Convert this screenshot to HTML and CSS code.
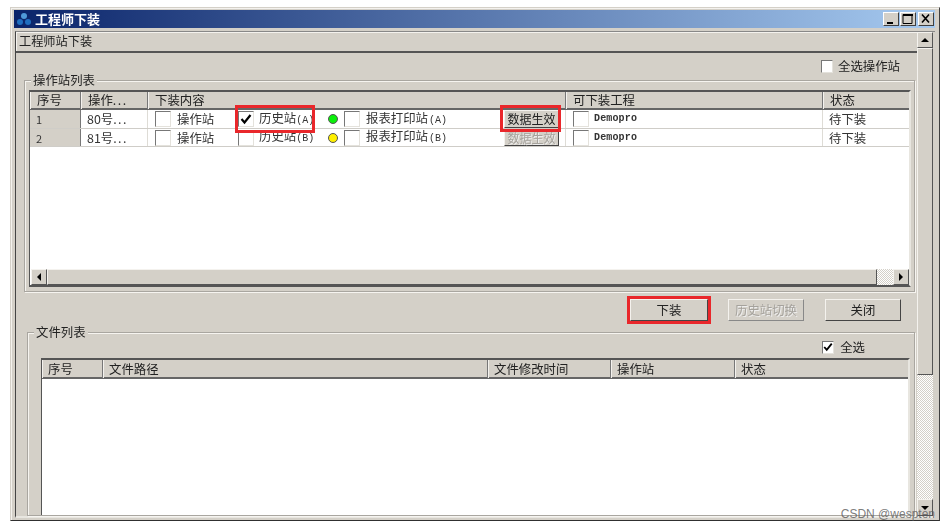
FILE: index.html
```html
<!DOCTYPE html>
<html lang="zh-CN">
<head>
<meta charset="utf-8">
<title>工程师下装</title>
<link rel="stylesheet" href="styles.css">
</head>
<body>
<div class="window">
  <div class="titlebar">
    <svg class="appicon" width="16" height="14" viewBox="0 0 16 14"><circle cx="8" cy="4" r="3" fill="#4f9ad8"/><circle cx="4" cy="10" r="3" fill="#1f6fc0"/><circle cx="12" cy="10" r="3" fill="#1f6fc0"/></svg>
    <span class="titletext">工程师下装</span>
    <div class="winbtns">
      <button class="winbtn"><svg width="14" height="12" viewBox="0 0 14 12"><rect x="3" y="9" width="6" height="2" fill="#000"/></svg></button>
      <button class="winbtn"><svg width="14" height="12" viewBox="0 0 14 12"><path d="M2 1.5h9v9h-9z" fill="none" stroke="#000"/><rect x="2" y="1" width="10" height="2" fill="#000"/></svg></button>
      <button class="winbtn winbtn-close"><svg width="14" height="12" viewBox="0 0 14 12"><path d="M3 1.5l7 8M10 1.5l-7 8" stroke="#000" stroke-width="1.6" fill="none"/></svg></button>
    </div>
  </div>
  <div class="client">
    <div class="main">
      <div class="tabhead">工程师站下装</div>
      <div class="panel">
        <label class="selall"><span class="cb cb-small"></span>全选操作站</label>
        <fieldset class="group group-stations">
          <legend>操作站列表</legend>
          <div class="list list-stations">
            <div class="row head cols-st">
              <div class="hc">序号</div><div class="hc">操作<span class="dots">...</span></div><div class="hc">下装内容</div><div class="hc">可下装工程</div><div class="hc">状态</div>
            </div>
            <div class="row item cols-st">
              <div class="c c-no">1</div>
              <div class="c">80号<span class="dots">...</span></div>
              <div class="c c-content">
                <span class="cb"></span><span>操作站</span>
                <span class="cb cb-on mark mark-a"><svg width="12" height="12" viewBox="0 0 12 12"><path d="M1.500 6l3 3.500L10.500 2" fill="none" stroke="#000" stroke-width="2.200"/></svg></span><span>历史站<small>(A)</small></span>
                <span class="led led-green"></span>
                <span class="cb"></span><span>报表打印站<small class="gap">(A)</small></span>
                <span class="cellbtn mark mark-b">数据生效</span>
              </div>
              <div class="c c-project"><span class="cb"></span><span class="mono">Demopro</span></div>
              <div class="c">待下装</div>
            </div>
            <div class="row item cols-st">
              <div class="c c-no">2</div>
              <div class="c">81号<span class="dots">...</span></div>
              <div class="c c-content">
                <span class="cb"></span><span>操作站</span>
                <span class="cb"></span><span>历史站<small>(B)</small></span>
                <span class="led led-yellow"></span>
                <span class="cb"></span><span>报表打印站<small class="gap">(B)</small></span>
                <span class="cellbtn cellbtn-off">数据生效</span>
              </div>
              <div class="c c-project"><span class="cb"></span><span class="mono">Demopro</span></div>
              <div class="c">待下装</div>
            </div>
            <div class="listfill"></div>
            <div class="hscroll">
              <span class="sbtn"><svg width="8" height="8" viewBox="0 0 8 8"><path d="M6 0v8L2 4z"/></svg></span>
              <span class="hthumb"></span>
              <span class="checker"></span>
              <span class="sbtn"><svg width="8" height="8" viewBox="0 0 8 8"><path d="M2 0v8l4-4z"/></svg></span>
            </div>
          </div>
        </fieldset>
        <div class="actions">
          <button class="btn btn-primary">下装</button>
          <button class="btn btn-off">历史站切换</button>
          <button class="btn btn-close">关闭</button>
        </div>
        <fieldset class="group group-files">
          <legend>文件列表</legend>
          <label class="selall selall-files"><span class="cb cb-small cb-on"><svg width="10" height="10" viewBox="0 0 12 12"><path d="M1.500 6l3 3.500L10.500 2" fill="none" stroke="#000" stroke-width="2.200"/></svg></span>全选</label>
          <div class="list list-files">
            <div class="row head head-files cols-files">
              <div class="hc">序号</div><div class="hc">文件路径</div><div class="hc">文件修改时间</div><div class="hc">操作站</div><div class="hc">状态</div>
            </div>
            <div class="listfill"></div>
          </div>
        </fieldset>
      </div>
    </div>
    <div class="vscroll">
      <span class="sbtn sbtn-v"><svg width="8" height="8" viewBox="0 0 8 8"><path d="M0 6h8L4 2z"/></svg></span>
      <span class="vthumb"></span>
      <span class="checker"></span>
      <span class="sbtn sbtn-v sbtn-down"><svg width="8" height="8" viewBox="0 0 8 8"><path d="M0 2h8L4 6z"/></svg></span>
    </div>
  </div>
</div>
<div class="watermark">CSDN @wespten</div>
</body>
</html>
```
FILE: styles.css
```css
* { box-sizing: border-box; }
html, body { margin: 0; height: 100%; background: #fff; overflow: hidden; }
body {
  font-family: "Noto Sans CJK SC", "Liberation Sans", sans-serif;
  font-size: 12.4px;
  line-height: 14px;
  color: #222;
  position: relative;
}
.window {
  width: 930px;
  height: 514px;
  margin: 7px 0 0 10px;
  padding: 2px 4px 2px 3px;
  background: #d4d0c8;
  border: 1px solid;
  border-color: #d4d0c8 #404040 #303030 #d4d0c8;
  box-shadow: inset 1px 1px 0 #f4f2ee;
  display: flex;
  flex-direction: column;
  filter: blur(0.4px);
}
.titlebar {
  height: 18px;
  flex: none;
  display: flex;
  align-items: center;
  padding: 0 1px 0 2px;
  color: #fff;
  background: linear-gradient(90deg, #0a246a, #a6caf0);
}
.appicon { flex: none; margin-right: 3px; }
.titletext { font-weight: 700; font-size: 13px; color: #fff; }
.winbtns { margin-left: auto; display: flex; gap: 1px; }
.winbtn {
  width: 16px;
  height: 14px;
  padding: 0;
  border: 1px solid;
  border-color: #fff #404040 #404040 #fff;
  background: #d4d0c8;
  display: flex;
  align-items: center;
  justify-content: center;
}
.winbtn-close { margin-left: 1px; }
.client {
  flex: 1;
  min-height: 0;
  margin: 3px 0 0 1px;
  display: flex;
  border-left: 1px solid #444;
  border-top: 1px solid #888;
  border-bottom: 2px solid #e8e6e0;
}
.main { width: 901px; flex: none; display: flex; flex-direction: column; min-height: 0; }
.tabhead {
  height: 21px;
  flex: none;
  padding: 2px 3px;
  background: #d4d0c8;
  box-shadow: inset 1px 1px 0 #f4f2ee;
  border-bottom: 2px solid #555;
  font-size: 12.2px;
}
.panel { flex: 1; min-height: 0; display: flex; flex-direction: column; }
.selall {
  display: flex;
  align-items: center;
  justify-content: flex-end;
  gap: 5px;
  height: 14px;
  margin: 6px 17px 0 0;
  flex: none;
}
.group {
  margin: 0;
  padding: 0;
  border: 1px solid #a9a6a0;
  box-shadow: inset 1px 1px 0 #f6f4f0, 1px 1px 0 #f6f4f0;
  min-width: 0;
}
.group legend {
  padding: 0 2px;
  margin: 0;
  line-height: 14px;
  background: #d4d0c8;
}
.group-stations {
  height: 219px;
  margin: 0 2px 0 8px;
  padding: 3px 3px 5px 4px;
  flex: none;
}
.group-stations legend { margin-left: 2px; }
.group-files {
  flex: 1;
  min-height: 0;
  margin: 0 2px 0 11px;
  padding: 0 4px 0 13px;
  display: flex;
  flex-direction: column;
}
.group-files legend { margin-left: -7px; }
.list {
  background: #fff;
  border-top: 2px solid #555;
  border-left: 1px solid #555;
  border-right: 2px solid #e8e6e0;
  display: flex;
  flex-direction: column;
}
.list-stations { height: 197px; border-bottom: 2px solid #555; }
.list-files { flex: 1; min-height: 0; margin-top: 4px; }
.listfill { flex: 1; min-height: 0; }
.row { display: grid; flex: none; }
.cols-st { grid-template-columns: 51px 67px 418px 257px 87px; }
.cols-files { grid-template-columns: 61px 385px 123px 124px 176px; }
.head { height: 18px; background: #d4d0c8; border-bottom: 2px solid #666; }
.head-files { height: 19px; }
.head-files .hc { padding: 0 6px; line-height: 18px; }
.hc { padding: 0 7px; border-right: 1px solid #777; box-shadow: inset 1px 0 0 #f4f2ee; white-space: nowrap; line-height: 17px; }
.hc:last-child { border-right: 0; }
.dots { letter-spacing: 1.5px; }
.item { height: 19px; border-bottom: 1px solid #cfcdc8; }
.item + .item { height: 18px; }
.c {
  padding: 0 6px;
  border-right: 1px solid #dedcd6;
  white-space: nowrap;
  display: flex;
  align-items: center;
  min-width: 0;
  color: #333;
}
.c:last-child { border-right: 0; }
.c-no { background: #d4d0c8; font-size: 11px; border-right: 1px solid #777; }
.c-content {
  display: grid;
  padding-left: 7px;
  grid-template-columns: 16px 67px 16px 74px 16px 16px 144px 55px;
  align-items: center;
  justify-items: start;
}
.c-content > span:nth-child(2) { padding-left: 6px; }
.c-content > span:nth-child(4) { padding-left: 5px; }
.c-content > span:nth-child(7) { padding-left: 6px; }
.c-content small { font-family: "Liberation Mono", monospace; font-size: 10px; }
.c-content small.gap { margin-left: 1px; }
.c-project { gap: 5px; padding-left: 7px; }
.cb {
  width: 16px;
  height: 16px;
  flex: none;
  display: flex;
  align-items: center;
  justify-content: center;
  background: #fff;
  border: 1px solid;
  border-color: #777 #e4e2dc #e4e2dc #777;
}
.cb-small { width: 12px; height: 13px; }
.mono { font-family: "Liberation Mono", monospace; font-size: 10px; font-weight: 700; color: #333; letter-spacing: 0.15px; }
.led { width: 10px; height: 10px; border-radius: 50%; border: 1px solid #555; }
.led-green { background: #0cf00c; }
.led-yellow { background: #fff000; }
.cellbtn {
  width: 55px;
  height: 18px;
  display: flex;
  align-items: center;
  justify-content: center;
  background: #d4d0c8;
  border: 1px solid;
  border-color: #f4f2ee #444 #444 #f4f2ee;
  font-size: 12px;
  color: #222;
}
.cellbtn-off { color: #a5a29c; text-shadow: 1px 1px 0 #eee; height: 17px; }
.mark { position: relative; }
.mark::after {
  content: "";
  position: absolute;
  box-sizing: border-box;
  border: 3px solid #e9272b;
}
.mark-a::after { left: -4px; top: -7px; width: 80px; height: 28px; }
.mark-b::after { left: -5px; top: -6px; width: 61px; height: 27px; }
.hscroll { height: 16px; margin-top: auto; display: flex; flex: none; background: #d4d0c8; margin-left: 1px; }
.sbtn {
  width: 16px;
  height: 16px;
  flex: none;
  display: flex;
  align-items: center;
  justify-content: center;
  background: #d4d0c8;
  border: 1px solid;
  border-color: #f4f2ee #555 #555 #f4f2ee;
}
.hthumb {
  flex: 1;
  background: #d4d0c8;
  border: 1px solid;
  border-color: #f4f2ee #555 #555 #f4f2ee;
}
.checker {
  flex: none;
  width: 16px;
  background: repeating-conic-gradient(#fff 0 25%, #d4d0c8 0 50%) 0 0 / 2px 2px;
}
.actions { height: 26px; flex: none; margin-top: 7px; display: flex; align-items: flex-start; gap: 20px; padding: 0 15px 0 614px; }
.btn {
  font: inherit;
  color: #222;
  width: 76px;
  height: 22px;
  padding: 0;
  background: #d4d0c8;
  border: 1px solid;
  border-color: #f4f2ee #444 #444 #f4f2ee;
}
.btn-primary { width: 78px; outline: 3px solid #e9272b; outline-offset: 0; }
.btn-off { color: #a5a29c; text-shadow: 1px 1px 0 #eee; border-color: #f4f2ee #888 #888 #f4f2ee; }
.btn-close { margin-left: 1px; }
.selall-files { margin: 1px 45px 0 0; gap: 6px; }
.vscroll { width: 16px; flex: none; display: flex; flex-direction: column; }
.sbtn-v { height: 16px; }
.sbtn-down { height: 17px; }
.vthumb {
  height: 327px;
  flex: none;
  background: #d4d0c8;
  border: 1px solid;
  border-color: #f4f2ee #555 #555 #f4f2ee;
}
.vscroll .checker { width: 16px; flex: 1; }
.watermark {
  position: absolute;
  right: 15px;
  top: 507px;
  font-family: "Liberation Sans", sans-serif;
  font-size: 12px;
  color: rgba(90, 90, 90, 0.8);
}
```
